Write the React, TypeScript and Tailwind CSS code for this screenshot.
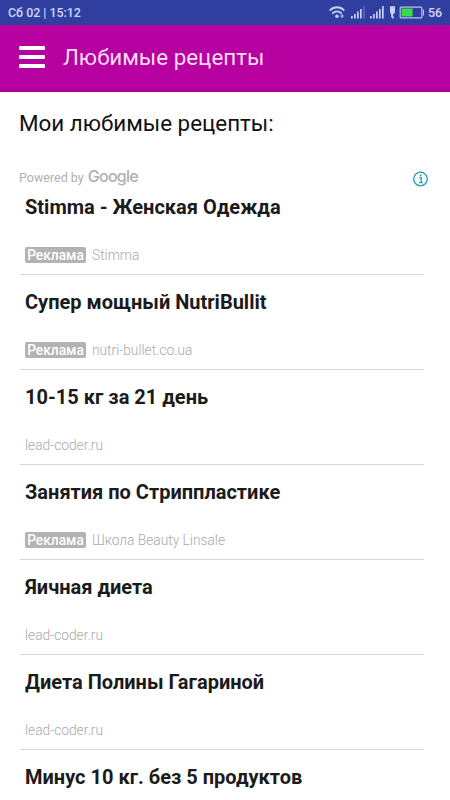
interface Recipe {
  title: string;
  source?: string;
  isAd?: boolean;
}

const recipes: Recipe[] = [
  { title: 'Stimma - Женская Одежда', source: 'Stimma', isAd: true },
  { title: 'Супер мощный NutriBullit', source: 'nutri-bullet.co.ua', isAd: true },
  { title: '10-15 кг за 21 день', source: 'lead-coder.ru' },
  { title: 'Занятия по Стриппластике', source: 'Школа Beauty Linsale', isAd: true },
  { title: 'Яичная диета', source: 'lead-coder.ru' },
  { title: 'Диета Полины Гагариной', source: 'lead-coder.ru' },
  { title: 'Минус 10 кг. без 5 продуктов' },
];

function StatusIcons() {
  return (
    <svg width="98" height="25" viewBox="-2 0 98 25" fill="none" className="block">
      {/* wifi */}
      <g stroke="#c9d0f5" strokeWidth="1.8" strokeLinecap="round">
        <path d="M1.2 10.2c3.6-3.9 10-3.9 13.6 0" />
        <path d="M3.8 13.2c2.3-2.5 6.1-2.5 8.4 0" />
      </g>
      <circle cx="8" cy="16.3" r="1.8" fill="#c9d0f5" />
      <circle cx="13" cy="16" r="1.7" fill="#9aa5e0" />
      {/* signal, first sim */}
      <g fill="#c9d0f5">
        <rect x="22" y="16" width="1.7" height="2.5" />
        <rect x="25" y="14" width="1.7" height="4.5" />
        <rect x="28" y="11.5" width="1.7" height="7" />
        <rect x="31" y="9" width="1.7" height="9.5" />
        <rect x="34.3" y="6" width="1.3" height="12.5" fill="#6573c4" />
      </g>
      {/* signal, second sim */}
      <g fill="#c9d0f5">
        <rect x="41" y="16" width="1.7" height="2.5" />
        <rect x="44" y="14" width="1.7" height="4.5" />
        <rect x="47" y="11.5" width="1.7" height="7" />
        <rect x="50" y="9" width="1.7" height="9.5" />
        <rect x="53" y="6" width="1.7" height="12.5" />
      </g>
      {/* charger plug */}
      <path d="M61 6.2h5v5.3c0 1.5-1 2.4-2 2.7v2l1.4 1.3-1.6 1.2-1.6-1.7V14c-.8-.5-1.2-1.4-1.2-2.7z" fill="#c9d0f5" />
      {/* battery */}
      <rect x="71.2" y="7.1" width="21.6" height="10.8" rx="1" stroke="#b9c1e8" strokeWidth="1.2" />
      <path d="M94.4 9.5v6" stroke="#b9c1e8" strokeWidth="1.2" />
      <rect x="72.6" y="8.5" width="11" height="8" fill="#3bd94d" />
    </svg>
  );
}

function StatusBar() {
  return (
    <div className="flex h-[25px] shrink-0 items-center bg-[#303f9f] pl-2 pr-[8px] text-[12.4px] font-medium leading-[25px] text-[#d0d7fa]">
      <span className="flex-1">Сб 02 | 15:12</span>
      <StatusIcons />
      <span className="w-[17px] text-right">56</span>
    </div>
  );
}

function Header() {
  return (
    <header className="flex h-[67px] shrink-0 items-center border-b border-[#a1008d] bg-[#b700a0] pl-[19px]">
      <button type="button" aria-label="Меню" className="mt-[-3px] flex w-[26px] flex-col gap-[5px]">
        <span className="h-1 rounded-[1px] bg-white" />
        <span className="h-1 rounded-[1px] bg-white" />
        <span className="h-1 rounded-[1px] bg-white" />
      </button>
      <h1 className="ml-[18px] mt-[-2px] text-[22.4px] leading-7 text-[#fbdcf7]">Любимые рецепты</h1>
    </header>
  );
}

function RecipeItem({ title, source, isAd }: Recipe) {
  return (
    <li className="h-[95px] shrink-0 border-b border-[#d6d6d6] pl-[5px] pt-[15px]">
      <h3 className="whitespace-nowrap text-xl font-bold leading-6 text-[#1b1b1b]">{title}</h3>
      {source && (
        <div className="mt-[28px] flex h-4 items-center text-[13.75px] leading-4">
          {isAd && (
            <span className="mr-[6px] h-4 w-[61px] rounded-[2px] bg-[#b3b3b3] text-center font-medium text-white">
              Реклама
            </span>
          )}
          <span className="font-light text-[#aaaaaa]">{source}</span>
        </div>
      )}
    </li>
  );
}

export default function App() {
  return (
    <div className="flex h-[800px] w-[450px] flex-col overflow-hidden bg-white font-['Roboto',sans-serif]">
      <StatusBar />
      <Header />
      <main className="flex shrink-0 flex-col pl-5 pr-[26px]">
        <h2 className="ml-[-1px] mt-[17px] text-[22.4px] leading-7 text-[#111111]">Мои любимые рецепты:</h2>
        <div className="mr-[-5px] mt-[30px] flex h-[13px] items-start justify-between">
          <div className="ml-[-1px] mt-px flex items-baseline gap-1 leading-[17px] text-[#b0b0b0]">
            <span className="text-[12.5px]">Powered by</span>
            <span className="font-['Inter',sans-serif] text-base leading-[17px] font-medium tracking-[-0.045em]">Google</span>
          </div>
          <svg width="16" height="16" viewBox="0 0 16 16" fill="none" className="mt-[4px]">
            <circle cx="7.5" cy="8" r="6.8" stroke="#1fa3b4" strokeWidth="1.3" />
            <path d="M6 6.9h2.3v4.8M6 11.7h3.8" stroke="#1fa3b4" strokeWidth="1.3" />
            <circle cx="7.6" cy="4.5" r="1" fill="#1fa3b4" />
          </svg>
        </div>
        <ul className="flex flex-col">
          {recipes.map((recipe) => (
            <RecipeItem key={recipe.title} {...recipe} />
          ))}
        </ul>
      </main>
    </div>
  );
}
